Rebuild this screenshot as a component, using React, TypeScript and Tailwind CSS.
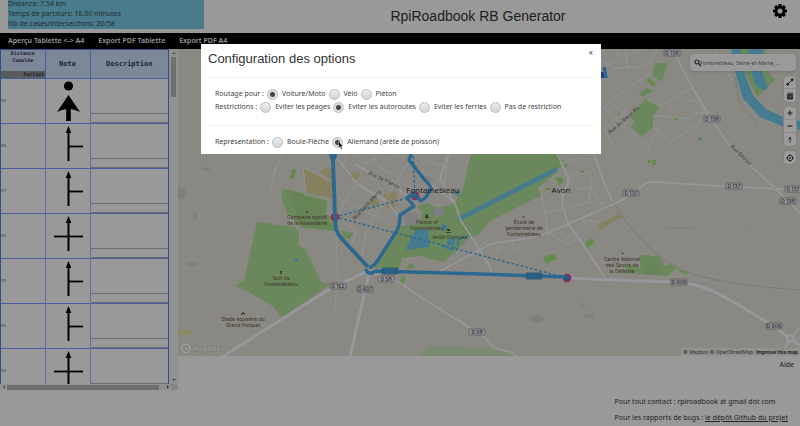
import { useState } from "react";
import type { ReactNode } from "react";

const noto = "font-['Noto_Sans','DejaVu_Sans',sans-serif]";
const arial = "font-['Liberation_Sans',Arial,sans-serif]";

function Gear() {
  return (
    <svg viewBox="-8 -8 16 16" className="size-4">
      {[0, 45, 90, 135, 180, 225, 270, 315].map((a) => (
        <rect key={a} x="-1.6" y="-7" width="3.2" height="4" rx=".4" transform={`rotate(${a})`} />
      ))}
      <circle r="3.9" fill="none" stroke="#000" strokeWidth="2.6" />
    </svg>
  );
}

function Header({ onOpen }: { onOpen: () => void }) {
  return (
    <header className="flex h-[33px] items-start pl-2 pr-3">
      <div className={`flex h-[29px] w-[196px] shrink-0 flex-col justify-end bg-[#4a7b8c] text-[7px] leading-[10px] text-[#1c2d33] ${noto}`}>
        <p>Distance: 7.54 km</p>
        <p>Temps de parcours: 16.00 minutes</p>
        <p>Nb de cases/intersections: 20/58</p>
      </div>
      <h1 className={`flex-1 pt-1.5 text-center text-[14px] leading-5 text-[#1c1c1c] ${arial}`}>RpiRoadbook RB Generator</h1>
      <div className="flex w-9 shrink-0 justify-end pt-[3px]">
        <button type="button" aria-label="Options" onClick={onOpen}>
          <Gear />
        </button>
      </div>
    </header>
  );
}

function Nav() {
  return (
    <nav className={`flex h-4 items-center gap-3.5 bg-black pl-2 text-[7px] font-semibold leading-4 text-[#999] ${noto}`}>
      <a href="#apercu">Aperçu Tablette &lt;-&gt; A4</a>
      <a href="#tablette">Export PDF Tablette</a>
      <a href="#a4">Export PDF A4</a>
    </nav>
  );
}

function Ball() {
  return (
    <svg viewBox="0 0 45 45" className="block size-[45px]">
      <circle cx="22.5" cy="7" r="4.6" />
      <path d="M22.5 16 L34 33 Q30 31 24.8 30 V42 H20.2 V30 Q15 31 11 33 Z" />
    </svg>
  );
}

function Branch({ cross }: { cross: boolean }) {
  return (
    <svg viewBox="0 0 45 45" className="block size-[45px]">
      <path d="M22.5 7 V37" stroke="#000" strokeWidth="2" />
      <path d="M22.5 2 L25.3 9 H19.7 Z" />
      <path d={cross ? "M8 22.5 H37" : "M22.5 22.5 H37"} stroke="#000" strokeWidth="1.8" />
    </svg>
  );
}

const rows = [
  { n: 59, kind: "ball" },
  { n: 58, kind: "right" },
  { n: 57, kind: "right" },
  { n: 56, kind: "cross" },
  { n: 55, kind: "right" },
  { n: 54, kind: "right" },
  { n: 53, kind: "cross" },
];

function Roadbook() {
  return (
    <section className="flex w-[178px] shrink-0 flex-col bg-[#999]">
      <div className="flex h-[335px]">
        <div className="h-full w-[169px] overflow-hidden border-x border-t border-[#304f8c]">
          <table className="w-full table-fixed border-collapse font-['DejaVu_Sans_Mono',monospace]">
            <colgroup>
              <col className="w-[44px]" />
              <col className="w-[45px]" />
              <col />
            </colgroup>
            <thead>
              <tr className="h-7 border-b border-[#4560a0] bg-[#7c8798] text-[7px] text-[#1e222a]">
                <th className="border-r border-[#4560a0] p-0 align-top text-[5px] leading-[7px]">
                  <div className="flex h-7 flex-col justify-between">
                    <span>
                      Distance
                      <br />
                      Cumulée
                    </span>
                    <span className="bg-[#595a5c] text-right">Partiel</span>
                  </div>
                </th>
                <th className="border-r border-[#4560a0] p-0">Note</th>
                <th className="p-0">Description</th>
              </tr>
            </thead>
            <tbody>
              {rows.map((r) => (
                <tr key={r.n} className="h-[45px] border-b border-[#4560a0]">
                  <td className="border-r border-[#5c72a5] p-0 text-[4px] text-[#444]">{r.n}</td>
                  <td className="border-r border-[#5c72a5] p-0">
                    <div className="h-11 overflow-hidden">
                      {r.kind === "ball" ? <Ball /> : <Branch cross={r.kind === "cross"} />}
                    </div>
                  </td>
                  <td className="p-0 align-bottom">
                    <div className="h-[10px] border-y border-[#6c6c6c]" />
                  </td>
                </tr>
              ))}
            </tbody>
          </table>
        </div>
        <div className="flex flex-1 flex-col items-center justify-between bg-[#919191] py-0.5">
          <div className="flex flex-col items-center gap-0.5">
            <svg viewBox="0 0 4 4" className="size-1"><path d="M0 3 L2 1 L4 3Z" fill="#555" /></svg>
            <div className="h-10 w-[5px] bg-[#6f6f6f]" />
          </div>
          <svg viewBox="0 0 4 4" className="size-1"><path d="M0 1 L2 3 L4 1Z" fill="#444" /></svg>
        </div>
      </div>
      <div className="flex h-1.5 items-center bg-[#919191]">
        <svg viewBox="0 0 7 6" className="h-1.5 w-[7px]"><path d="M5 1 L3 3 L5 5Z" fill="#555" /></svg>
        <div className="h-[5px] w-[152px] bg-[#6f6f6f]" />
        <svg viewBox="0 0 12 6" className="h-1.5 w-3"><path d="M8 1 L10 3 L8 5Z" fill="#333" /></svg>
        <div className="h-full flex-1 bg-[#868686]" />
      </div>
    </section>
  );
}

const greens = [
  "257,222 295,227 299,233 299,245 306,250 321,282 331,284 281,318 274,307 249,292 235,286 244,281",
  "284,189 328,199 326,214 336,219 336,231 300,227 287,213 281,197",
  "471,154 557,154 564,162 557,172 538,188 542,195 490,221 478,235 469,237 457,251 443,262 430,259 422,256 402,258 400,268 374,268 394,234 400,226 418,224 422,213 417,206 427,203 437,208 446,206 455,203 463,189",
  "341,230 353,233 350,239 344,238",
  "655,63 668,63 662,82 652,75",
  "645,99 659,107 653,118 653,127 642,137 631,127 635,122 630,117",
  "741,49 765,49 768,72 775,80 757,97 745,73",
  "639,94 646,88 653,91 643,97",
  "625,266 629,265 640,268 640,255 660,256 665,266 671,264 677,268 667,276 626,273",
];

const darkGreens = [
  "292,169 296,170 294,179 290,178",
  "402,276 406,277 402,286 399,284",
  "408,265 412,263 415,268 407,269",
  "585,243 592,238 595,243 587,248",
  "543,257 554,254 557,259 546,264",
  "556,177 562,177 564,183 558,185",
  "545,188 551,188 551,190 545,190",
  "564,165 567,163 568,166 565,168",
  "580,171 584,170 584,173 581,173",
  "648,77 656,83 654,87 647,82",
  "656,79 658,77 659,80",
  "617,114 620,112 621,115 618,116",
  "674,118 678,118 678,120 674,120",
  "648,160 651,160 651,163 648,163",
  "652,160 656,160 656,165 652,165",
  "679,269 688,273 687,275 679,271",
];

const tans = [
  "304,168 332,182 332,198 306,193",
  "320,172 325,168 332,169 332,181",
  "350,174 358,172 362,175 356,182 349,178",
  "383,194 397,192 394,210 387,207",
  "370,201 377,198 379,204 374,208",
  "597,226 618,214 622,217 601,229",
];

const streets =
  "M266 185 L276 168 L284 154 M276 168 L271 188 L273 191 M304 168 L334 183 M306 193 L303 168 M303 194 L328 200 M336 235 L338 282 L334 312 " +
  "M348 154 L342 166 M355 154 L366 163 L378 157 M366 163 L356 184 L340 210 M372 154 L380 168 L396 154 M380 168 L398 178 L410 160 M398 178 L389 194 L376 214 L366 232 L362 255 " +
  "M337 198 L350 204 L383 220 M352 180 L392 203 M340 218 L356 232 L350 250 M404 180 L412 190 M420 170 L444 184 L449 154 M426 160 L450 168 M398 178 L403 203 M430 178 L442 163 " +
  "M541 190 L549 238 M546 213 L592 202 M568 177 L590 172 L600 165 M577 189 L590 188 L589 203 M590 172 L592 190 L602 205 M558 228 L566 238 L580 232 M560 164 L580 158 L597 160 M549 233 L567 244 L580 238 M582 218 L588 229 M583 220 L600 222 M497 247 L496 254 M502 245 L499 253 M512 242 L514 250 L522 246 M480 247 L492 235 " +
  "M600 82 L615 68 L640 67 L652 59 L657 49 M616 57 L619 49 M600 69 L640 49 M600 111 L620 93 L652 73 M603 130 L628 108 M600 104 L622 124 L648 147 M609 100 L627 117 M653 125 L669 143 L708 117 M658 107 L692 88 M653 115 L690 119 M648 150 L652 137 L660 128 M683 101 L697 101 L704 109 M694 113 L710 113 M670 105 L670 111 M605 130 L612 144 M639 154 L632 149 M628 67 L625 50 M600 60 L612 66 M715 49 L722 60 L732 80 M780 49 L800 70";

const roads =
  "M557 154 L568 177 L568 185 L563 191 L562 204 L568 223 L605 277 M480 250 L490 244 L530 238 L548 233 L620 201 L635 192 L643 185 Q648 182 655 182 L720 186 L800 190 M594 154 L605 185 L613 202 M676 56 L691 85 L711 119 L733 150 L775 188 L800 213 M480 250 L493 274 " +
  "M370 272 L400 283 L425 300 L482 335 L494 348 L510 352 L518 357 M337 158 L358 185 L386 201 L398 215 M355 164 L400 190 L413 204 M440 179 L455 203 L460 219 L491 268 M425 180 L455 203 M448 154 L440 179 M491 244 L440 271 M786 346 L800 327 M789 340 L780 356";

type Tag = [number, number, string];
const tags: Tag[] = [
  [672, 53, "D 138"], [712, 119, "D 138"], [631, 193, "D 137"], [734, 186, "D 137"], [793, 189, "D 137"], [788, 201, "D 138"],
  [338, 286, "D 152"], [386, 279, "D 58"], [365, 289, "D 607"], [477, 332, "D 58"], [679, 282, "D 606"], [774, 326, "D 606"],
];

type Label = [number, number, string[]];
const labels: Label[] = [
  [307, 219, ["Complexe sportif", "de la Faisanderie"]],
  [281, 280, ["Golf de", "Fontainebleau"]],
  [243, 321, ["Stade équestre du", "Grand Parquet"]],
  [427, 224, ["Palace of", "Fontainebleau"]],
  [449, 239, ["Jardin Français"]],
  [524, 224, ["École de", "gendarmerie de", "Fontainebleau"]],
  [622, 261, ["Centre National", "des Sports de", "la Défense"]],
];

function RoadTag({ x, y, text, on }: { x: number; y: number; text: string; on?: boolean }) {
  return (
    <g>
      <rect x={x - 8} y={y - 3} width="16" height="6" rx="1" fill={on ? "#2f6b91" : "#96969a"} stroke={on ? "#23506f" : "#55565a"} strokeWidth=".8" />
      <text x={x} y={y + 2} textAnchor="middle" className="font-[Inter,sans-serif] text-[5px] font-semibold" fill={on ? "#23506f" : "#333"}>
        {text}
      </text>
    </g>
  );
}

function MapCanvas() {
  return (
    <svg viewBox="178 49 622 307" preserveAspectRatio="xMidYMid slice" className="block h-full w-full">
      <rect x="178" y="49" width="622" height="307" fill="#8a8883" />
      <g fill="#7f7e79">
        <ellipse cx="181" cy="193" rx="5" ry="6" />
        <ellipse cx="206" cy="169" rx="4" ry="1.5" />
        <ellipse cx="192" cy="264" rx="5" ry="1.5" />
        <ellipse cx="195" cy="216" rx="2" ry="3" />
        <ellipse cx="537" cy="319" rx="7" ry="3.5" />
        <path d="M579 303 L584 304 L585 308 L581 307Z M584 315 L595 313 L592 317 L584 318Z M662 227 L697 227 L680 229Z M743 227 L758 230 L746 228Z" />
      </g>
      {greens.map((p) => <polygon key={p} points={p} fill="#6b885c" />)}
      <path d="M428 346 L484 347 Q505 348 518 356 H420 Z" fill="#7b8b71" />
      <path d="M289 190 L326 200 L324 218 L336 231 L300 227 Z M645 265 H659 V275 H645Z" fill="#648252" opacity=".6" />
      {tans.map((p) => <polygon key={p} points={p} fill="#87805e" />)}
      {darkGreens.map((p) => <polygon key={p} points={p} fill="#648b4e" />)}
      <polygon points="178,330 193,330 190,335 178,335" fill="#8a8a62" />
      <g fill="#808084">
        <polygon points="404,214 417,212 420,222 406,226" />
        <polygon points="432,210 442,207 445,213 435,218" />
        <polygon points="425,177 433,175 435,180 427,183" />
      </g>
      <g fill="#457b91">
        <path d="M731 49 L735 72 L743 98 L760 117 L784 127 L800 130 V121 L783 117 L766 109 L753 95 L745 75 L741 49Z" />
        <path d="M748 49 L763 49 L762 72 L768 88 L763 91 L755 84 L751 72Z" />
        <path d="M416 229 L428 230 L430 247 L406 250 L408 244Z M441 226 L445 223 L448 229 L443 231Z" />
        <circle cx="451" cy="242" r="4" />
        <circle cx="460" cy="219" r="2.5" />
        <circle cx="457" cy="193" r="2.5" />
        <circle cx="700" cy="139" r="1.5" />
        <path d="M294 259 L296 257 L299 261 L296 262Z" />
      </g>
      <path d="M461 218 L557 169" stroke="#457b91" strokeWidth="4.5" fill="none" />
      <path d="M441 245 L451 250 L458 245 V239 L470 236" stroke="#457b91" strokeWidth="2" fill="none" />
      <path d="M613 202 Q630 230 642 239 Q665 268 700 276 Q725 284 800 290 M735 77 L740 105 L758 123" stroke="#7c7974" strokeWidth="1" fill="none" />
      <path d={streets} stroke="#97979a" strokeWidth=".8" fill="none" />
      <path d={roads} stroke="#97979c" strokeWidth="1.6" fill="none" strokeLinejoin="round" />
      <path d="M222 357 L330 289 L370 270 L364 295 L350 357 M567 278 L640 281 L676 282 Q700 283 730 300 Q765 320 790 338 L801 346" stroke="#97979c" strokeWidth="3" fill="none" />
      <circle cx="790" cy="338" r="3" fill="#8a8883" stroke="#97979c" strokeWidth="2" />
      <circle cx="775" cy="188" r="1.6" fill="#8a8883" stroke="#97979c" />
      <rect x="599" y="72" width="5" height="6" fill="#2f3990" />
      {tags.map(([x, y, t]) => <RoadTag key={`${x}-${y}`} x={x} y={y} text={t} />)}

      <g className="font-[Inter,'Noto_Sans',sans-serif] text-[5px]" fill="#3c3229">
        {labels.map(([x, y, lines]) => (
          <text key={`${x}-${y}`} textAnchor="middle">
            {lines.map((l, i) => <tspan key={l} x={x} y={y + i * 6}>{l}</tspan>)}
          </text>
        ))}
        <text transform="translate(368 174) rotate(26)" fill="#333">Rue de France</text>
        <text transform="translate(355 220) rotate(-47)" fill="#333">Rue Saint-Merry</text>
        <text transform="translate(610 134) rotate(-41)" fill="#333">Rue du Vieux Ru</text>
        <text transform="translate(730 147) rotate(44)" fill="#333">Rue Bézout</text>
      </g>
      <g fill="#33291f">
        <circle cx="307" cy="212" r=".9" />
        <path d="M280 271 h2 l-.5 2 v1 h-1 v-1z M241 314 l2-2 2 2 v1 h-1 v-1 h-2 v1 h-1z M425 218 h3.600 v-1 l-1-1 .5-1.500 h-2.600 l.5 1.500 -1 1z M447 229 h3 l-.5 2 h-2z M446 232 h5 v.8 h-5z" />
        <circle cx="523.500" cy="217" r=".8" />
        <circle cx="622.500" cy="253.500" r=".8" />
      </g>

      {[[335, 217], [415, 196], [567, 278]].map(([x, y]) => (
        <circle key={x} cx={x} cy={y} r="4.300" fill="#a81e49" />
      ))}
      <g fill="none" stroke="#2b688f" strokeLinejoin="round">
        <path d="M330 152 L333 160 L335 217 L336 229 Q338 235 342 239 L368 267 M336 154 L333 160" strokeWidth="3.900" />
        <path d="M412 152 L409 160 L424 179 Q432 187 431 189 L426 197 L421 201 L413 193 L407 198 L414 206 L400 215 Q400 226 396 232 L378 260 Q374 266 369 268" strokeWidth="3.400" />
        <path d="M366 269 Q367 274 372 273 L376 271 L480 274 L567 277 M604 67 L606 78" strokeWidth="3.600" />
        <path d="M335 217 L415 196 L413 154 M335 217 L567 278" strokeWidth="1.500" strokeDasharray="2.600 2.200" />
      </g>
      <circle cx="415" cy="196" r="2.800" fill="#2b6187" />
      <circle cx="567" cy="278" r="3" fill="#2b5587" />
      <RoadTag x={390} y={271} text="D 606" on />
      <RoadTag x={534} y={276} text="D 606" on />
      <g textAnchor="middle" className="font-['Open_Sans','Noto_Sans',sans-serif] text-[8px]" fill="#161616">
        <text x="433" y="193">Fontainebleau</text>
        <text x="561" y="193">Avon</text>
      </g>
      <g fill="#999" stroke="#68665f" strokeWidth=".5">
        <circle cx="186" cy="348.500" r="4" fill="none" stroke="#a3a3a3" strokeWidth="1.200" />
        <path d="M184 350.500 C183.500 346 189 345.500 188.500 349 C188 351 185.500 351 184 350.500Z" />
        <text x="192" y="351" paintOrder="stroke" className="font-['Open_Sans',sans-serif] text-[7px] font-bold">mapbox</text>
      </g>
    </svg>
  );
}

function Tool({ label, children }: { label: string; children: ReactNode }) {
  return (
    <button type="button" aria-label={label} className="flex h-[13px] w-3 items-center justify-center">
      <svg viewBox="0 0 12 12" className="size-3" fill="#222" stroke="#222">{children}</svg>
    </button>
  );
}

const toolGroup = "flex flex-col divide-y divide-[#8b8b8b] rounded-sm bg-[#9c9c9c] ring-1 ring-[#828180]";

function MapPanel() {
  return (
    <section className="relative h-[307px] min-w-0 flex-1 overflow-hidden">
      <MapCanvas />
      <div className="absolute right-1 top-[5px] flex flex-col items-end gap-[5px]">
        <label className="flex h-[17px] w-[106px] items-center rounded-sm bg-[#9a9a9a] px-1 shadow">
          <svg viewBox="0 0 8 8" className="-mr-0.5 size-2 shrink-0" fill="none" stroke="#222" strokeWidth="1.200">
            <circle cx="3" cy="3" r="2" />
            <path d="M4.500 4.500 L7 7" />
          </svg>
          <input
            type="text"
            aria-label="Rechercher"
            placeholder="Fontainebleau, Seine-et-Marne, …"
            className="block h-4 min-w-0 flex-1 bg-transparent font-[Inter,sans-serif] text-[5px] leading-4 outline-none placeholder:text-[#444]"
          />
        </label>
        <div className={toolGroup}>
          <Tool label="Tracer">
            <path d="M4 8 L8 4" strokeWidth="1" />
            <circle cx="3.800" cy="8.200" r="1" />
            <circle cx="8.200" cy="3.800" r="1" />
          </Tool>
          <Tool label="Supprimer">
            <path d="M3.500 4.500 H8.500 V9 H3.500Z M3 3.200 H9" strokeWidth=".8" />
            <path d="M5 5.500 V8 M7 5.500 V8" stroke="#999" strokeWidth=".6" />
          </Tool>
        </div>
        <div className={toolGroup}>
          <Tool label="Zoom avant"><path d="M6 3.500 V8.500 M3.500 6 H8.500" strokeWidth="1.200" /></Tool>
          <Tool label="Zoom arrière"><path d="M3.500 6 H8.500" strokeWidth="1.200" /></Tool>
          <Tool label="Nord">
            <path d="M6 2.500 L7.600 5.500 H4.400Z" stroke="none" />
            <path d="M6 9.500 L7.600 6.500 H4.400Z" stroke="none" fill="#666" />
          </Tool>
        </div>
        <div className={toolGroup}>
          <Tool label="Me localiser">
            <circle cx="6" cy="6" r="2.700" fill="none" strokeWidth="1" />
            <circle cx="6" cy="6" r="1" stroke="none" />
            <path d="M6 2.200 V3.200 M6 8.800 V9.800 M2.200 6 H3.200 M8.800 6 H9.800" strokeWidth=".8" />
          </Tool>
        </div>
      </div>
      <div className="absolute bottom-0 right-0 flex h-2 items-center gap-[3px] bg-[#92918e] px-0.5 font-[Inter,sans-serif] text-[5px] leading-[8px] text-[#333]">
        <a href="#mapbox">© Mapbox © OpenStreetMap</a>
        <a href="#improve" className="font-bold text-[#222]">Improve this map</a>
      </div>
    </section>
  );
}

interface OptionProps {
  group: string;
  value: string;
  current: string;
  onPick: (v: string) => void;
}

function Option({ group, value, current, onPick }: OptionProps) {
  return (
    <label className="flex items-center gap-1">
      <input
        type="radio"
        name={group}
        checked={current === value}
        onChange={() => onPick(value)}
        className="size-[11px] appearance-none rounded-full border border-[#bdbdbd] bg-linear-to-b from-[#eee] to-[#d4d4d4] checked:bg-[radial-gradient(circle,#444_0_2px,#dcdcdc_3px)]"
      />
      {value}
    </label>
  );
}

function Choice({ legend, group, values, initial }: { legend: string; group: string; values: string[]; initial: string }) {
  const [current, setCurrent] = useState(initial);
  return (
    <div role="radiogroup" aria-label={legend} className="flex h-[13px] items-center gap-[3px] px-[7px]">
      <span>{legend}</span>
      {values.map((v) => <Option key={v} group={group} value={v} current={current} onPick={setCurrent} />)}
    </div>
  );
}

function OptionsDialog({ onClose }: { onClose: () => void }) {
  return (
    <div className="absolute inset-0 flex items-start justify-center pl-0.5 pt-11">
      <div role="dialog" aria-label="Configuration des options" className={`relative w-[400px] bg-white px-[7px] pb-[5px] text-[7px] text-[#444] ${noto}`}>
        <button type="button" aria-label="Fermer" onClick={onClose} className="absolute right-2 top-1 text-[8px] leading-[10px] text-[#444]">
          ×
        </button>
        <h2 className={`h-[34px] border-b border-[#eee] pt-[5px] text-[13px] leading-5 text-[#333] ${arial}`}>Configuration des options</h2>
        <div className="mt-2.5 h-[38px] border-b border-[#eee]">
          <Choice legend="Routage pour :" group="routage" values={["Voiture/Moto", "Vélo", "Piéton"]} initial="Voiture/Moto" />
          <Choice
            legend="Restrictions :"
            group="restrictions"
            values={["Eviter les péages", "Eviter les autoroutes", "Eviter les ferries", "Pas de restriction"]}
            initial="Eviter les autoroutes"
          />
        </div>
        <div className="mt-2.5">
          <Choice legend="Représentation :" group="representation" values={["Boule-Flèche", "Allemand (arête de poisson)"]} initial="Allemand (arête de poisson)" />
        </div>
        <svg viewBox="0 0 6 9" className="absolute bottom-1 left-[137px] h-[9px] w-1.5">
          <path d="M.5 .5 V7 L2 5.700 L3.200 8.300 L4.300 7.800 L3.200 5.300 H5.200Z" fill="#111" stroke="#fff" strokeWidth=".4" />
        </svg>
      </div>
    </div>
  );
}

export default function App() {
  const [open, setOpen] = useState(true);
  return (
    <div className="relative min-h-screen overflow-hidden bg-[#999]">
      <Header onOpen={() => setOpen(true)} />
      <Nav />
      <main className="flex">
        <Roadbook />
        <div className="flex min-w-0 flex-1 flex-col">
          <div className="flex">
            <MapPanel />
          </div>
          <div className={`flex justify-end pr-1.5 pt-1 text-[7px] leading-[10px] text-[#222] ${noto}`}>
            <a href="#aide">Aide</a>
          </div>
        </div>
      </main>
      <footer className={`flex justify-end pr-3 pt-1 text-[7px] leading-4 text-[#222] ${noto}`}>
        <div>
          <p>Pour tout contact : rpiroadbook at gmail dot com</p>
          <p>
            Pour les rapports de bugs : <a href="#github" className="underline">le dépôt Github du projet</a>
          </p>
        </div>
      </footer>
      {open && <OptionsDialog onClose={() => setOpen(false)} />}
    </div>
  );
}
